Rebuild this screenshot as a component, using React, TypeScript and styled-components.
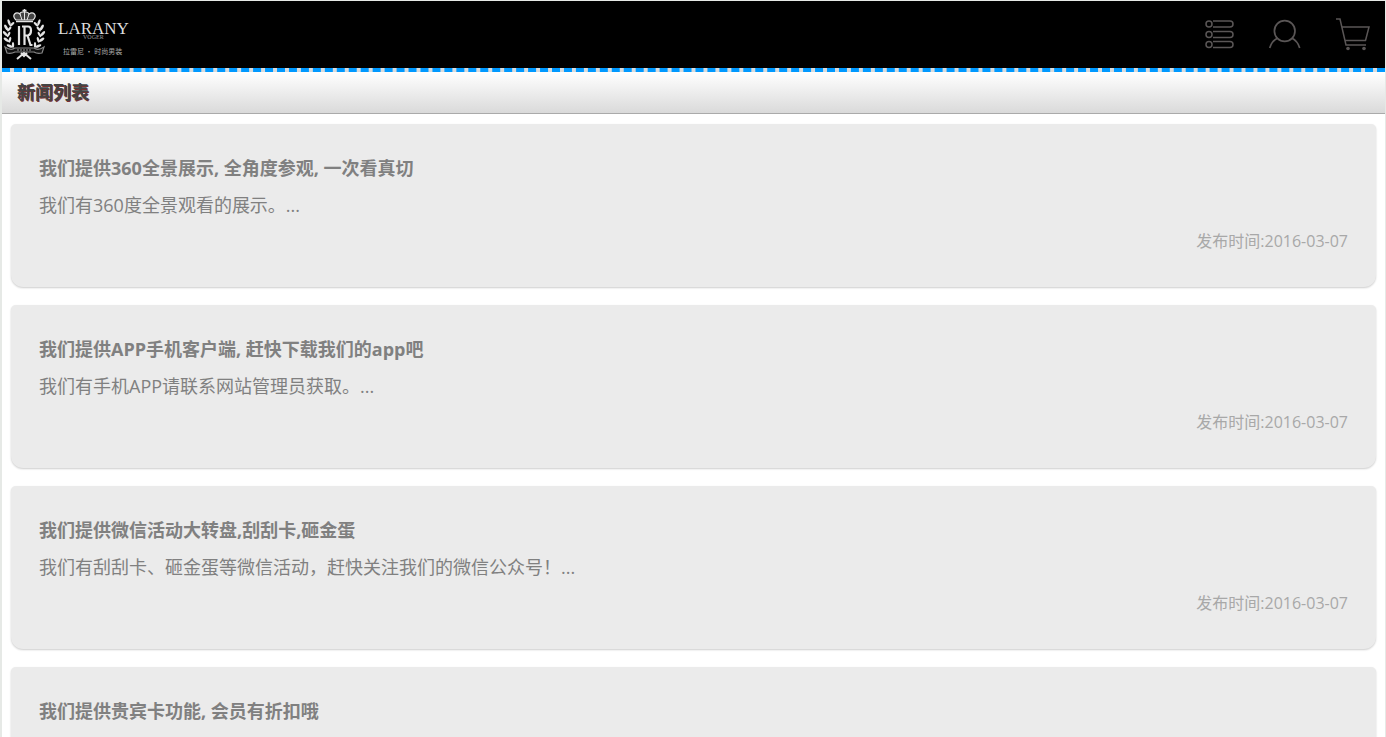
import React from "react";
import styled, { createGlobalStyle } from "styled-components";

const GlobalStyle = createGlobalStyle`
  * { box-sizing: border-box; }
  body {
    margin: 0;
    background: #fff;
    font-family: "Open Sans", "Noto Sans CJK SC", sans-serif;
  }
`;

const Page = styled.div`
  border: 1px solid #e6e9e6;
  border-left-width: 2px;
  min-height: 100vh;
`;

const Header = styled.header`
  display: flex;
  align-items: center;
  justify-content: space-between;
  height: 67px;
  padding-right: 14px;
  background: #000;
`;

const LogoLink = styled.a`
  display: block;
  line-height: 0;
`;

const Nav = styled.nav`
  display: flex;
  align-items: center;
  gap: 32px;
`;

const NavLink = styled.a`
  display: block;
  line-height: 0;
  color: #5a5656;
`;

const TitleBar = styled.h1`
  margin: 0;
  height: 46px;
  padding: 0 15px;
  border-top: 4px dashed #0099ff;
  border-bottom: 1px solid #aaa;
  background: linear-gradient(#fff, #dadada);
  color: #444;
  font-size: 18px;
  line-height: 41px;
  font-weight: 700;
  text-shadow: 1px 1px 0 #733;
`;

const NewsList = styled.main`
  display: flex;
  flex-direction: column;
  gap: 18px;
  padding: 10px 9px;
`;

const Card = styled.article`
  height: 163px;
  padding: 26px 28px;
  border-radius: 5px 5px 12px 12px;
  background: #ebebeb;
  box-shadow: 0 1px 2px rgba(0, 0, 0, 0.2);
  color: #808080;
`;

const CardTitle = styled.h2`
  margin: 0;
  font-size: 18px;
  line-height: 36px;
  font-weight: 700;
`;

const TitleLink = styled.a`
  color: inherit;
  text-decoration: none;
`;

const Summary = styled.p`
  margin: 0;
  min-height: 38px;
  font-size: 18px;
  line-height: 38px;
`;

const PublishDate = styled.p`
  margin: 0;
  color: #a8a8a8;
  font-size: 16px;
  line-height: 34px;
  text-align: right;
`;

const news = [
  { title: "我们提供360全景展示, 全角度参观, 一次看真切", summary: "我们有360度全景观看的展示。...", date: "2016-03-07" },
  { title: "我们提供APP手机客户端, 赶快下载我们的app吧", summary: "我们有手机APP请联系网站管理员获取。...", date: "2016-03-07" },
  { title: "我们提供微信活动大转盘,刮刮卡,砸金蛋", summary: "我们有刮刮卡、砸金蛋等微信活动，赶快关注我们的微信公众号！...", date: "2016-03-07" },
  { title: "我们提供贵宾卡功能, 会员有折扣哦", summary: "", date: "2016-03-07" },
];

const leaves = [
  [8, 21, -15], [5, 26, -25], [4, 32, -35], [5, 38, -50], [8, 44, -65],
];

function Laurel() {
  return (
    <g fill="#e4e4e4" stroke="none">
      {leaves.map(([x, y, r]) => (
        <g key={y} transform={`translate(${x} ${y}) rotate(${r + 30})`}>
          <ellipse cx="-1" cy="0" rx="1.3" ry="3.2" transform="rotate(-35)" />
          <ellipse cx="3" cy="0" rx="1.2" ry="3" transform="rotate(35)" />
        </g>
      ))}
    </g>
  );
}

function Logo() {
  return (
    <svg width="136" height="67" viewBox="0 0 136 67" role="img" aria-label="LARANY VOGER">
      <Laurel />
      <g transform="translate(44 0) scale(-1 1)"><Laurel /></g>
      <g fill="none" stroke="#e4e4e4" strokeWidth="1.2">
        <path d="M14 19c-5-5 0-9 4-6c0-3 8-3 9 0c4-3 9 1 4 6z" fill="#444" />
        <path d="M18 13l2 6M27 13l-2 6M22.500 11v8" strokeWidth="1" />
        <path d="M22.500 8v4M20.500 9.500h4M14 20.500h17" strokeWidth="1.400" />
        <path d="M17 25v19M22.500 25v19M20 25.500h6q3 0 3 4t-3 5h-3M25.500 34.500l3 9.500h2" strokeWidth="2.200" />
        <path d="M3 46q6 4 10 1h19q4 3 10-1l-2 6q-5 1-8-1H13q-4 2-8 1z" fill="#111" stroke="#888" />
        <path d="M15 49h14" stroke="#555" strokeWidth="2" strokeDasharray="2 1" />
        <path d="M15 58l7-6l7 6M19 52l3 3l3-3" strokeWidth="2" />
      </g>
      <g fontFamily="Liberation Serif, serif">
        <text x="56" y="33" fontSize="17" fill="#ddd">LARANY</text>
        <text x="81" y="38" fontSize="6" fill="#999">VOGER</text>
      </g>
      <text x="61" y="53" fontSize="7" fill="#aaa" fontFamily="Noto Sans CJK SC, sans-serif">拉雷尼 · 时尚男装</text>
    </svg>
  );
}

function ListIcon() {
  return (
    <svg width="36" height="36" viewBox="0 0 36 36" fill="none" stroke="currentColor" strokeWidth="1.500" aria-hidden="true">
      {[7, 17.5, 27.5].map((y) => (
        <g key={y}>
          <circle cx="10" cy={y} r="3" />
          <path d={`M14 ${y - 3}H31a3 3 0 0 1 0 6H14`} />
        </g>
      ))}
    </svg>
  );
}

function UserIcon() {
  return (
    <svg width="36" height="36" viewBox="0 0 36 36" fill="none" stroke="currentColor" strokeWidth="1.700" aria-hidden="true">
      <circle cx="17.700" cy="14" r="10.300" />
      <path d="M10.700 21q-6 3-8 10M24.700 21q6 3 8 10" />
    </svg>
  );
}

function CartIcon() {
  return (
    <svg width="36" height="36" viewBox="0 0 36 36" fill="none" stroke="currentColor" strokeWidth="1.500" aria-hidden="true">
      <path d="M1 2h4L11 28H31M6.500 10H34L30.500 23.500H10" />
      <circle cx="13" cy="31.500" r="1.800" fill="currentColor" stroke="none" />
      <circle cx="29" cy="31.500" r="1.800" fill="currentColor" stroke="none" />
    </svg>
  );
}

export default function App() {
  return (
    <>
      <GlobalStyle />
      <Page>
        <Header>
          <LogoLink href="#"><Logo /></LogoLink>
          <Nav>
            <NavLink href="#" aria-label="分类"><ListIcon /></NavLink>
            <NavLink href="#" aria-label="会员"><UserIcon /></NavLink>
            <NavLink href="#" aria-label="购物车"><CartIcon /></NavLink>
          </Nav>
        </Header>
        <TitleBar>新闻列表</TitleBar>
        <NewsList>
          {news.map((item) => (
            <Card key={item.title}>
              <CardTitle><TitleLink href="#">{item.title}</TitleLink></CardTitle>
              <Summary>{item.summary}</Summary>
              <PublishDate>发布时间:{item.date}</PublishDate>
            </Card>
          ))}
        </NewsList>
      </Page>
    </>
  );
}
